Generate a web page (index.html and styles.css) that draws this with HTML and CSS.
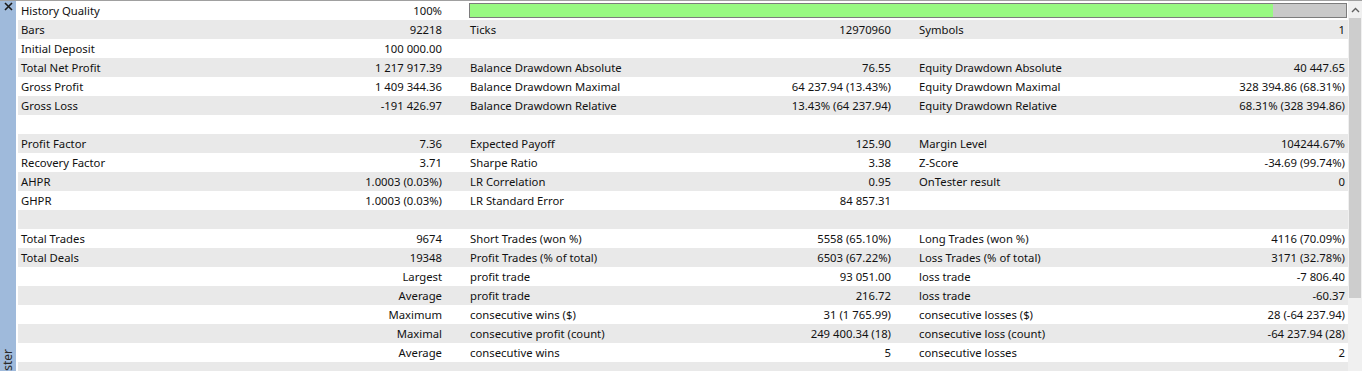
FILE: index.html
```html
<!DOCTYPE html>
<html>
<head>
<meta charset="utf-8">
<title>Strategy Tester Report</title>
<link rel="stylesheet" href="styles.css">
</head>
<body>
<div class="app">
  <aside class="sidebar">
    <div class="close">
      <svg width="9" height="9" viewBox="0 0 9 9"><path d="M1 1L8 8M8 1L1 8" stroke="#1a1a1a" stroke-width="1.6"/></svg>
    </div>
    <span class="vlabel">Strategy Tester</span>
  </aside>
  <main class="report">
    <div class="row">
      <div class="cell c1"><span>History Quality</span><span>100%</span></div>
      <div class="barcell"><div class="bar"><div class="fill" style="width:91.7%"></div></div></div>
    </div>
    <div class="row alt">
      <div class="cell c1"><span>Bars</span><span>92218</span></div>
      <div class="cell c2"><span>Ticks</span><span>12970960</span></div>
      <div class="cell c3"><span>Symbols</span><span>1</span></div>
    </div>
    <div class="row">
      <div class="cell c1"><span>Initial Deposit</span><span>100 000.00</span></div>
      <div class="cell c2"></div>
      <div class="cell c3"></div>
    </div>
    <div class="row alt">
      <div class="cell c1"><span>Total Net Profit</span><span>1 217 917.39</span></div>
      <div class="cell c2"><span>Balance Drawdown Absolute</span><span>76.55</span></div>
      <div class="cell c3"><span>Equity Drawdown Absolute</span><span>40 447.65</span></div>
    </div>
    <div class="row">
      <div class="cell c1"><span>Gross Profit</span><span>1 409 344.36</span></div>
      <div class="cell c2"><span>Balance Drawdown Maximal</span><span>64 237.94 (13.43%)</span></div>
      <div class="cell c3"><span>Equity Drawdown Maximal</span><span>328 394.86 (68.31%)</span></div>
    </div>
    <div class="row alt">
      <div class="cell c1"><span>Gross Loss</span><span>-191 426.97</span></div>
      <div class="cell c2"><span>Balance Drawdown Relative</span><span>13.43% (64 237.94)</span></div>
      <div class="cell c3"><span>Equity Drawdown Relative</span><span>68.31% (328 394.86)</span></div>
    </div>
    <div class="row"></div>
    <div class="row alt">
      <div class="cell c1"><span>Profit Factor</span><span>7.36</span></div>
      <div class="cell c2"><span>Expected Payoff</span><span>125.90</span></div>
      <div class="cell c3"><span>Margin Level</span><span>104244.67%</span></div>
    </div>
    <div class="row">
      <div class="cell c1"><span>Recovery Factor</span><span>3.71</span></div>
      <div class="cell c2"><span>Sharpe Ratio</span><span>3.38</span></div>
      <div class="cell c3"><span>Z-Score</span><span>-34.69 (99.74%)</span></div>
    </div>
    <div class="row alt">
      <div class="cell c1"><span>AHPR</span><span>1.0003 (0.03%)</span></div>
      <div class="cell c2"><span>LR Correlation</span><span>0.95</span></div>
      <div class="cell c3"><span>OnTester result</span><span>0</span></div>
    </div>
    <div class="row">
      <div class="cell c1"><span>GHPR</span><span>1.0003 (0.03%)</span></div>
      <div class="cell c2"><span>LR Standard Error</span><span>84 857.31</span></div>
      <div class="cell c3"></div>
    </div>
    <div class="row alt"></div>
    <div class="row">
      <div class="cell c1"><span>Total Trades</span><span>9674</span></div>
      <div class="cell c2"><span>Short Trades (won %)</span><span>5558 (65.10%)</span></div>
      <div class="cell c3"><span>Long Trades (won %)</span><span>4116 (70.09%)</span></div>
    </div>
    <div class="row alt">
      <div class="cell c1"><span>Total Deals</span><span>19348</span></div>
      <div class="cell c2"><span>Profit Trades (% of total)</span><span>6503 (67.22%)</span></div>
      <div class="cell c3"><span>Loss Trades (% of total)</span><span>3171 (32.78%)</span></div>
    </div>
    <div class="row">
      <div class="cell c1"><span></span><span>Largest</span></div>
      <div class="cell c2"><span>profit trade</span><span>93 051.00</span></div>
      <div class="cell c3"><span>loss trade</span><span>-7 806.40</span></div>
    </div>
    <div class="row alt">
      <div class="cell c1"><span></span><span>Average</span></div>
      <div class="cell c2"><span>profit trade</span><span>216.72</span></div>
      <div class="cell c3"><span>loss trade</span><span>-60.37</span></div>
    </div>
    <div class="row">
      <div class="cell c1"><span></span><span>Maximum</span></div>
      <div class="cell c2"><span>consecutive wins ($)</span><span>31 (1 765.99)</span></div>
      <div class="cell c3"><span>consecutive losses ($)</span><span>28 (-64 237.94)</span></div>
    </div>
    <div class="row alt">
      <div class="cell c1"><span></span><span>Maximal</span></div>
      <div class="cell c2"><span>consecutive profit (count)</span><span>249 400.34 (18)</span></div>
      <div class="cell c3"><span>consecutive loss (count)</span><span>-64 237.94 (28)</span></div>
    </div>
    <div class="row">
      <div class="cell c1"><span></span><span>Average</span></div>
      <div class="cell c2"><span>consecutive wins</span><span>5</span></div>
      <div class="cell c3"><span>consecutive losses</span><span>2</span></div>
    </div>
    <div class="row alt"></div>
  </main>
  <div class="scrollbar">
    <div class="arrow">
      <svg width="9" height="6" viewBox="0 0 9 6"><path d="M1 5L4.5 1.5L8 5" fill="none" stroke="#606060" stroke-width="1.4"/></svg>
    </div>
    <div class="thumb"></div>
  </div>
</div>
</body>
</html>
```

FILE: styles.css
```css
html, body {
  margin: 0;
  padding: 0;
  background: #ffffff;
  overflow: hidden;
}

body {
  font-family: "Noto Sans", "Liberation Sans", sans-serif;
  font-size: 11.3px;
  color: #111111;
}

.app {
  display: flex;
  height: 371px;
  border-top: 1px solid #a0a0a0;
  box-sizing: border-box;
  overflow: hidden;
}

.sidebar {
  width: 16px;
  flex-shrink: 0;
  background: #9fbadb;
  display: flex;
  flex-direction: column;
  align-items: center;
  overflow: hidden;
}

.close {
  height: 18px;
  display: flex;
  align-items: center;
  justify-content: center;
  padding-top: 1px;
}

.vlabel {
  writing-mode: vertical-rl;
  transform: rotate(180deg);
  margin-top: 338px;
  flex-shrink: 0;
  color: #2a2a2a;
  font-size: 12px;
  white-space: nowrap;
  line-height: 14px;
}

.report {
  width: 1332px;
  flex-shrink: 0;
  padding-left: 2px;
  box-sizing: border-box;
}

.row {
  display: grid;
  grid-template-columns: 448px 449px 433px;
  height: 19px;
  background: #ffffff;
}

.row.alt {
  background: #e9e9e9;
}

.cell {
  display: flex;
  justify-content: space-between;
  align-items: center;
  white-space: nowrap;
  line-height: 19px;
}

.c1 { padding: 0 24px 0 3px; }
.c2 { padding: 0 24px 0 4px; }
.c3 { padding: 0 3px 0 4px; }

.barcell {
  grid-column: 2 / 4;
  padding: 2px 1px 1px 3px;
}

.bar {
  height: 15px;
  box-sizing: border-box;
  border: 1px solid #7c7c7c;
  background: #c9c9c9;
}

.fill {
  height: 100%;
  background: #98f982;
}

.scrollbar {
  flex: 1;
  background: #f0f0f0;
  display: flex;
  flex-direction: column;
}

.arrow {
  height: 17px;
  display: flex;
  align-items: center;
  justify-content: center;
}

.thumb {
  height: 280px;
  margin: 0 1px;
  background: #cdcdcd;
}
```
